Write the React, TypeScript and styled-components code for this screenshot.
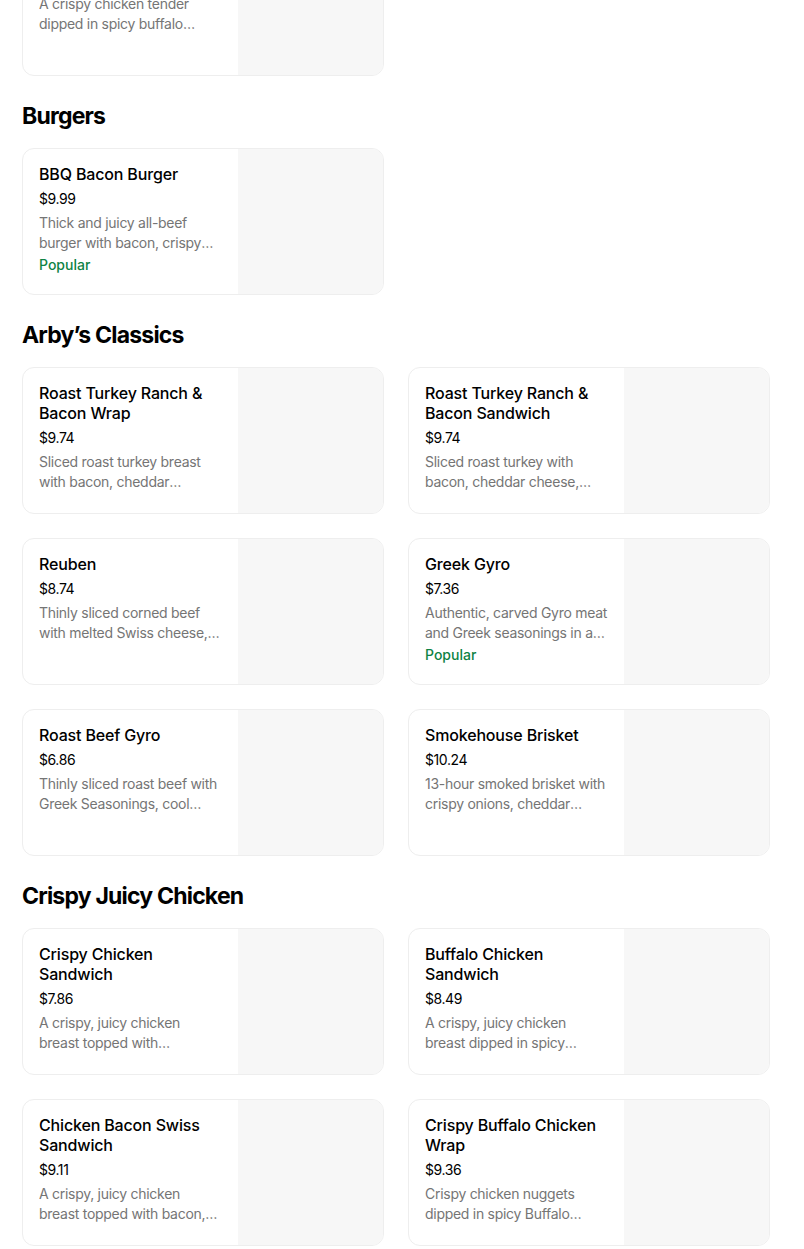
import styled, { createGlobalStyle } from 'styled-components'

const GlobalStyle = createGlobalStyle`
    html, body {
        margin: 0;
        padding: 0;
        background: #ffffff;
    }
    body {
        font-family: Inter, 'Noto Sans', 'Liberation Sans', sans-serif;
        color: #000000;
        overflow: hidden;
    }
`

// the screenshot is taken part-way down the menu, so the page starts above the fold
const Page = styled.main`
    width: 748px;
    padding: 0 22px;
    margin-top: -71px;
`

const Section = styled.section`
    & + & {
        padding-top: 24px;
    }
`

const SectionTitle = styled.h2`
    margin: 0 0 16px;
    font-size: 23px;
    line-height: 32px;
    font-weight: 700;
    letter-spacing: -0.035em;
`

const Grid = styled.div`
    display: grid;
    grid-template-columns: 1fr 1fr;
    gap: 24px;
`

const Card = styled.article`
    display: flex;
    height: 147px;
    box-sizing: border-box;
    border: 1px solid #eeeeee;
    border-radius: 12px;
    overflow: hidden;
    background: #ffffff;
`

const Info = styled.div`
    flex: 1;
    min-width: 0;
    padding: 15px 16px 0;
    display: flex;
    flex-direction: column;
`

const ItemName = styled.h3`
    margin: 0;
    font-size: 16px;
    line-height: 20px;
    font-weight: 500;
    letter-spacing: -0.01em;
    color: #000000;
`

const Price = styled.div`
    margin-top: 5px;
    font-size: 14px;
    line-height: 20px;
    color: #000000;
    letter-spacing: -0.03em;
`

const Description = styled.p`
    margin: 4px 0 0;
    font-size: 14px;
    line-height: 20px;
    letter-spacing: -0.02em;
    color: #757575;
    display: -webkit-box;
    -webkit-line-clamp: 2;
    -webkit-box-orient: vertical;
    overflow: hidden;
`

const Badge = styled.span`
    margin-top: 2px;
    font-size: 14px;
    line-height: 20px;
    font-weight: 500;
    color: #0e8345;
`

const Thumb = styled.div`
    width: 145px;
    flex-shrink: 0;
    background: #f7f7f7;
`

interface Item {
    name: string
    price: string
    description: string
    popular?: boolean
}

interface MenuSection {
    title?: string
    items: Item[]
}

const sections: MenuSection[] = [
    {
        items: [
            {
                name: 'Buffalo Chicken Tender',
                price: '$3.99',
                description:
                    'A crispy chicken tender dipped in spicy buffalo sauce.',
            },
        ],
    },
    {
        title: 'Burgers',
        items: [
            {
                name: 'BBQ Bacon Burger',
                price: '$9.99',
                description:
                    'Thick and juicy all-beef burger with bacon, crispy onions, cheddar cheese and BBQ sauce.',
                popular: true,
            },
        ],
    },
    {
        title: 'Arby\u2019s Classics',
        items: [
            {
                name: 'Roast Turkey Ranch & Bacon Wrap',
                price: '$9.74',
                description:
                    'Sliced roast turkey breast with bacon, cheddar cheese, ranch, lettuce and tomato.',
            },
            {
                name: 'Roast Turkey Ranch & Bacon Sandwich',
                price: '$9.74',
                description:
                    'Sliced roast turkey with bacon, cheddar cheese, ranch, lettuce and tomato.',
            },
            {
                name: 'Reuben',
                price: '$8.74',
                description:
                    'Thinly sliced corned beef with melted Swiss cheese, sauerkraut and Thousand Island.',
            },
            {
                name: 'Greek Gyro',
                price: '$7.36',
                description:
                    'Authentic, carved Gyro meat and Greek seasonings in a warm pita.',
                popular: true,
            },
            {
                name: 'Roast Beef Gyro',
                price: '$6.86',
                description:
                    'Thinly sliced roast beef with Greek Seasonings, cool tzatziki sauce, tomatoes and onions.',
            },
            {
                name: 'Smokehouse Brisket',
                price: '$10.24',
                description:
                    '13-hour smoked brisket with crispy onions, cheddar cheese and BBQ sauce.',
            },
        ],
    },
    {
        title: 'Crispy Juicy Chicken',
        items: [
            {
                name: 'Crispy Chicken Sandwich',
                price: '$7.86',
                description:
                    'A crispy, juicy chicken breast topped with shredded lettuce, tomato and mayo.',
            },
            {
                name: 'Buffalo Chicken Sandwich',
                price: '$8.49',
                description:
                    'A crispy, juicy chicken breast dipped in spicy Buffalo sauce with ranch.',
            },
            {
                name: 'Chicken Bacon Swiss Sandwich',
                price: '$9.11',
                description:
                    'A crispy, juicy chicken breast topped with bacon, Swiss cheese and honey mustard.',
            },
            {
                name: 'Crispy Buffalo Chicken Wrap',
                price: '$9.36',
                description:
                    'Crispy chicken nuggets dipped in spicy Buffalo sauce with ranch and lettuce.',
            },
        ],
    },
]

function MenuCard({ name, price, description, popular }: Item) {
    return (
        <Card>
            <Info>
                <ItemName>{name}</ItemName>
                <Price>{price}</Price>
                <Description>{description}</Description>
                {popular && <Badge>Popular</Badge>}
            </Info>
            <Thumb />
        </Card>
    )
}

export default function App() {
    return (
        <>
            <GlobalStyle />
            <Page>
                {sections.map((section, i) => (
                    <Section key={i}>
                        {section.title && (
                            <SectionTitle>{section.title}</SectionTitle>
                        )}
                        <Grid>
                            {section.items.map((item) => (
                                <MenuCard key={item.name} {...item} />
                            ))}
                        </Grid>
                    </Section>
                ))}
            </Page>
        </>
    )
}
